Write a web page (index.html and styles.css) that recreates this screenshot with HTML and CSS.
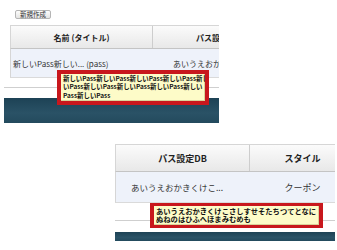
FILE: index.html
```html
<!DOCTYPE html>
<html lang="ja">
<head>
  <meta charset="UTF-8">
  <title>Pass tooltip</title>
  <link rel="stylesheet" href="styles.css">
</head>
<body>
  <!-- top capture -->
  <div class="panel panel-top">
    <div class="toolbar">
      <button class="btn">新規作成</button>
    </div>
    <div class="table">
      <div class="head">
        <div class="th col-name">名前 (タイトル)</div>
        <div class="th col-db">パス設定DB</div>
        <div class="th col-fill"></div>
      </div>
      <div class="row">
        <div class="td col-name">新しいPass新しい... (pass)</div>
        <div class="td col-db">あいうえおかきくけこ...</div>
        <div class="td col-fill"></div>
      </div>
    </div>
    <div class="gap"></div>
    <div class="band"></div>

    <div class="tip tip-top">
      <div class="tip-inner">
        新しいPass新しいPass新しいPass新しいPass新し<br>
        いPass新しいPass新しいPass新しいPass新しい<br>
        Pass新しいPass
      </div>
    </div>
  </div>

  <!-- bottom capture -->
  <div class="panel panel-bottom">
    <div class="table">
      <div class="head">
        <div class="th col-db">パス設定DB</div>
        <div class="th col-style">スタイル</div>
      </div>
      <div class="row">
        <div class="td col-db">あいうえおかきくけこ...</div>
        <div class="td col-style">クーポン</div>
      </div>
    </div>
    <div class="gap"></div>
    <div class="band"></div>

    <div class="tip tip-bottom">
      <div class="tip-inner">
        あいうえおかきくけこさしすせそたちつてとなに<br>
        ぬねのはひふへほまみむめも
      </div>
    </div>
  </div>
</body>
</html>
```

FILE: styles.css
```css
body {
  margin: 0;
  background-color: white;
  font-family: "Noto Sans CJK JP", "Noto Sans", sans-serif;
  color: #333;
  width: 337px;
  height: 250px;
  overflow: hidden;
}

.panel {
  position: relative;
  overflow: hidden;
}

/* ---------- top capture ---------- */

.panel-top {
  margin-left: 4px;
  width: 215px;
  padding-top: 10px;
}

.toolbar {
  display: flex;
  padding-left: 11px;
  height: 9px;
}

.btn {
  margin: 0;
  padding: 0 4px;
  height: 9px;
  font-family: inherit;
  font-size: 6.5px;
  line-height: 7px;
  color: #333;
  background: linear-gradient(#fdfdfd, #e4e4e4);
  border: 1px solid #b5b5b5;
  border-radius: 2px;
}

.panel-top .table {
  margin-top: 6px;
  margin-left: 6px;
  width: 300px;
}

.panel-top .head {
  height: 24px;
}

.panel-top .row {
  height: 29px;
}

.panel-top .col-name {
  width: 142px;
}

.panel-top .col-db {
  width: 130px;
}

.panel-top .th,
.panel-top .td {
  font-size: 8px;
}

.panel-top .td.col-name {
  justify-content: flex-start;
  padding-left: 2px;
}

.panel-top .td.col-db {
  justify-content: flex-start;
  padding-left: 20px;
}

.panel-top .gap {
  height: 9px;
  border-bottom: 1px solid #cfcfcf;
  margin-bottom: 10px;
}

.panel-top .band {
  height: 25px;
}

/* ---------- bottom capture ---------- */

.panel-bottom {
  margin-top: 21px;
  margin-left: 115px;
  width: 220px;
}

.panel-bottom .head {
  height: 28px;
}

.panel-bottom .row {
  height: 31px;
}

.panel-bottom .table {
  width: 240px;
}

.panel-bottom .col-db {
  width: 134px;
}

.panel-bottom .th,
.panel-bottom .td {
  font-size: 9px;
}

.panel-bottom .td.col-db {
  justify-content: flex-start;
  padding-left: 15px;
  font-size: 8.5px;
}

.panel-bottom .gap {
  height: 17px;
  border-bottom: 1px solid #cfcfcf;
  margin-bottom: 11px;
}

.panel-bottom .band {
  height: 9px;
}

/* ---------- table ---------- */

.head,
.row {
  display: flex;
}

.th,
.td {
  display: flex;
  align-items: center;
  justify-content: center;
  box-sizing: border-box;
  white-space: nowrap;
  overflow: hidden;
}

.head {
  background: linear-gradient(#fbfbfb, #e8e8e8);
  border-top: 1px solid #d6d6d6;
  border-left: 1px solid #d6d6d6;
  border-bottom: 1px solid #c4c4c4;
  box-sizing: border-box;
}

.th {
  font-weight: bold;
  color: #222;
  border-right: 1px solid #cdcdcd;
}

.th:last-child {
  flex: 1;
  border-right: none;
}

.row {
  background-color: #eef2fa;
  border-left: 1px solid #d6d6d6;
  border-bottom: 1px solid #dadada;
  box-sizing: border-box;
}

.td {
  color: #333;
}

.td:last-child {
  flex: 1;
}

.band {
  background: linear-gradient(#1d4255, #2a5266 60%, #234a5d);
}

/* ---------- tooltips ---------- */

.tip {
  position: absolute;
  box-sizing: border-box;
  border: 4px solid #c8171d;
  background-color: #c8171d;
}

.tip-inner {
  height: 100%;
  box-sizing: border-box;
  background-color: #fdfbc8;
  box-shadow: inset -1px -1px 0 #d9d39a;
  color: #111;
  font-weight: bold;
  white-space: nowrap;
  overflow: hidden;
}

.tip-top {
  left: 53px;
  top: 70px;
  width: 152px;
  height: 35px;
}

.tip-top .tip-inner {
  font-size: 6.4px;
  line-height: 8.4px;
  padding: 1px 0 0 2px;
}

.tip-bottom {
  left: 35px;
  top: 59px;
  width: 173px;
  height: 25px;
  border-width: 3px 4px;
}

.tip-bottom .tip-inner {
  font-size: 7.3px;
  line-height: 8.4px;
  padding: 1px 0 0 2px;
}
```
